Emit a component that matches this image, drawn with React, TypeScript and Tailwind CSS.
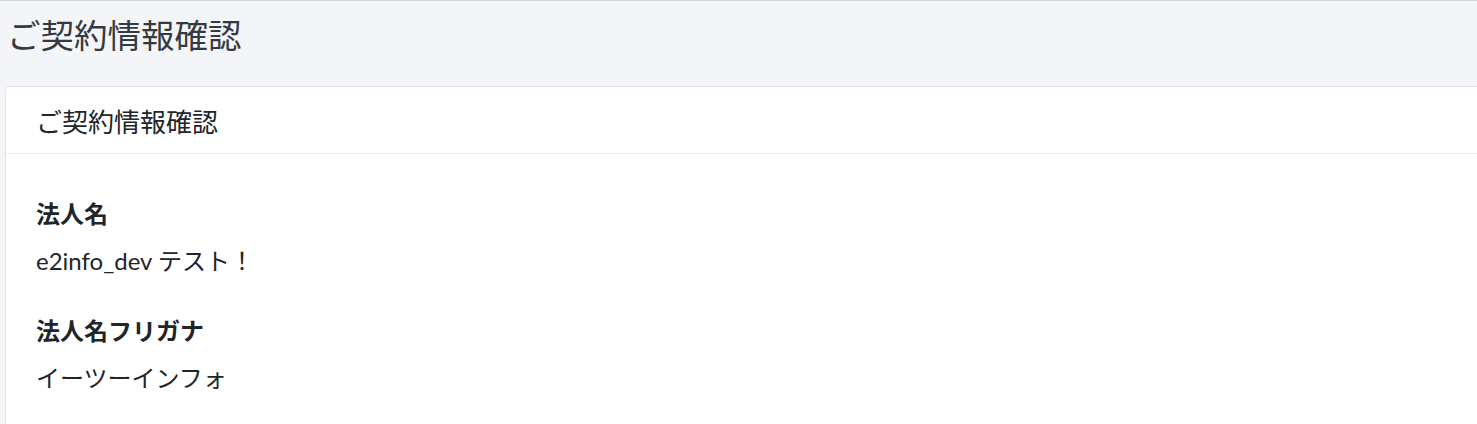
import React from 'react';

const fields = [
  { label: '法人名', value: 'e2info_dev テスト！' },
  { label: '法人名フリガナ', value: 'イーツーインフォ' },
];

const App: React.FC = () => {
  return (
    <div className="min-h-[424px] bg-[#f4f5f9] border-t border-[#d2d3d8] pt-[14px] pl-[5px] font-['Lato','Noto_Sans_CJK_JP',sans-serif] overflow-hidden">
      <h1 className="pl-[2px] text-[33.5px] leading-[40px] text-[#343a40] mb-[31px]">ご契約情報確認</h1>

      <div className="bg-white border border-r-0 border-[#e3e4e8] rounded-l-[5px] min-h-[340px]">
        <div className="h-[67px] flex items-center pt-[4px] px-[30px] border-b border-[#e9eaee]">
          <h2 className="text-[26px] leading-[36px] text-[#212529]">ご契約情報確認</h2>
        </div>

        <div className="px-[30px] pt-[42px]">
          {fields.map((field, index) => (
            <div key={index} className="mb-[34px]">
              <div className="text-[24px] leading-[36px] font-bold text-[#212529]">{field.label}</div>
              <div className="mt-[11px] text-[24px] leading-[36px] text-[#212529]">{field.value}</div>
            </div>
          ))}
        </div>
      </div>
    </div>
  );
};

export default App;
